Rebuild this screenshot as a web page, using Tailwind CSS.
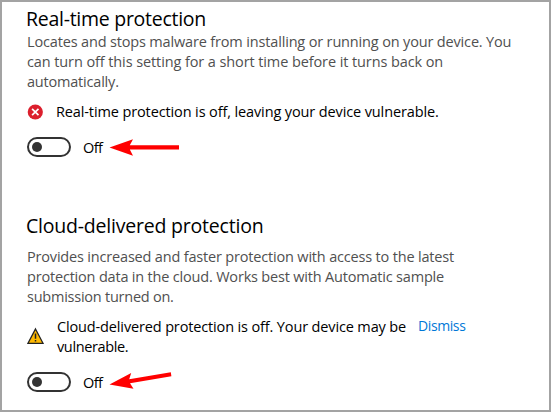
<!DOCTYPE html>
<html lang="en">
<head>
  <meta charset="UTF-8" />
  <meta name="viewport" content="width=device-width, initial-scale=1.0" />
  <title>Virus &amp; threat protection settings</title>
  <script src="https://cdn.jsdelivr.net/npm/@tailwindcss/browser@4"></script>
</head>
<body class="bg-white">
  <main class="w-[551px] h-[412px] overflow-hidden border-2 border-[#a3a3a3] pl-[25px] font-['Open_Sans',sans-serif] text-[14.5px] leading-5 text-black whitespace-nowrap">
    <section class="h-[207px] pt-1">
      <h2 class="text-[19.5px] leading-[26px] -ml-px tracking-[-0.27px]">Real-time protection</h2>
      <p class="text-[#505050]">
        <span class="tracking-[-0.16px]">Locates and stops malware from installing or running on your device. You</span><br />
        <span class="tracking-[-0.1px]">can turn off this setting for a short time before it turns back on</span><br />
        <span class="tracking-[-0.2px]">automatically.</span>
      </p>
      <div class="flex items-center mt-2.5 h-5">
        <svg class="w-4 h-4 mr-[13px] -mt-px" viewBox="0 0 16 16">
          <circle cx="8.3" cy="8" r="7.6" fill="#dc1f2d" />
          <path d="M5.100 4.800l6.400 6.400M11.500 4.800L5.100 11.200" stroke="#fff" stroke-width="1.7" />
        </svg>
        <span class="tracking-[-0.12px]">Real-time protection is off, leaving your device vulnerable.</span>
      </div>
      <div class="flex items-center mt-[15px] h-5">
        <div class="w-11 h-5 rounded-full border-2 border-[#333] flex items-center pl-[3px]">
          <div class="w-2.5 h-2.5 rounded-full bg-[#333]"></div>
        </div>
        <span class="ml-3 mt-0.5 w-[26px] tracking-[-0.6px]">Off</span>
        <svg class="w-[72px] h-5" viewBox="0 0 72 20">
          <path d="M.5 10.400L24 2.200l-3.200 6H70v4.200H20.800l3.200 6.300z" fill="#f00" />
        </svg>
      </div>
    </section>

    <section class="pt-1">
      <h2 class="text-[19.5px] leading-[26px] -ml-px tracking-[-0.21px]">Cloud-delivered protection</h2>
      <p class="text-[#505050] mt-2">
        <span class="tracking-[-0.18px]">Provides increased and faster protection with access to the latest</span><br />
        <span class="tracking-[-0.19px]">protection data in the cloud. Works best with Automatic sample</span><br />
        <span class="tracking-[-0.24px]">submission turned on.</span>
      </p>
      <div class="flex mt-2.5">
        <svg class="w-[18px] h-[18px] mr-3 mt-2.5" viewBox="0 0 18 18">
          <path d="M8.500 2L16 16.300H1z" fill="#ffb900" stroke="#222" stroke-width="1.300" />
          <path d="M8.500 6.500v5.300M8.500 12.900v1.700" stroke="#222" stroke-width="1.500" />
        </svg>
        <p class="w-[350px]">
          <span class="tracking-[-0.14px]">Cloud-delivered protection is off. Your device may be</span><br />
          <span class="tracking-[-0.38px]">vulnerable.</span>
        </p>
        <a class="ml-[11px] -mt-px text-[14px] leading-5 text-[#0078d7] tracking-[-0.4px]">Dismiss</a>
      </div>
      <div class="flex items-center mt-[15px] h-5">
        <div class="w-11 h-5 rounded-full border-2 border-[#333] flex items-center pl-[3px]">
          <div class="w-2.5 h-2.5 rounded-full bg-[#333]"></div>
        </div>
        <span class="ml-3 mt-0.5 w-[26px] tracking-[-0.6px]">Off</span>
        <svg class="w-[72px] h-5 overflow-visible" viewBox="0 0 72 20">
          <path d="M.500 12.400L22.200 1l-2 6.200L61.800.2l.6 4L21 11.200l3.500 5.500z" fill="#f00" />
        </svg>
      </div>
    </section>
  </main>
</body>
</html>
